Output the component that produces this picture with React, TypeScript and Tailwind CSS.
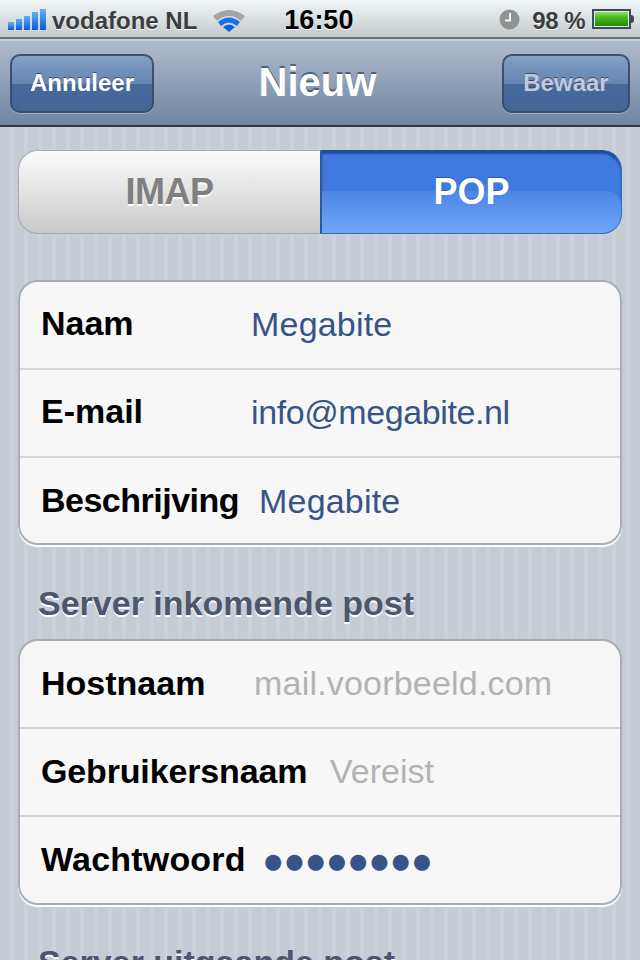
const sans = "font-['Liberation_Sans',Arial,sans-serif]";

function SignalBars() {
  return (
    <svg width="39" height="21" viewBox="0 0 39 21" className="shrink-0">
      <defs>
        <linearGradient id="signal" x1="0" y1="0" x2="0" y2="1">
          <stop offset="0" stopColor="#5cb4f5" />
          <stop offset="1" stopColor="#0a58e0" />
        </linearGradient>
      </defs>
      <rect x="0" y="13" width="6" height="8" fill="url(#signal)" />
      <rect x="8" y="10" width="6" height="11" fill="url(#signal)" />
      <rect x="16" y="7" width="6" height="14" fill="url(#signal)" />
      <rect x="24" y="3" width="6" height="18" fill="url(#signal)" />
      <rect x="32" y="0" width="6" height="21" fill="url(#signal)" />
    </svg>
  );
}

function WifiIcon() {
  return (
    <svg width="34" height="25" viewBox="0 0 34 25" className="shrink-0">
      <path d="M1 9 Q17 -3 33 9 L29 14 Q17 4 5 14 Z" fill="#a3a5a6" />
      <path d="M6 15 Q17 6 28 15 L25 19 Q17 12 9 19 Z" fill="#1a6ee8" />
      <path d="M11 20 Q17 15 23 20 L17 25 Z" fill="#0f5fe0" />
    </svg>
  );
}

function ClockIcon() {
  return (
    <svg width="21" height="21" viewBox="0 0 21 21" className="shrink-0">
      <circle cx="10.5" cy="10.5" r="10" fill="#8d9391" />
      <path d="M11 4 V11.5 H6" fill="none" stroke="#f4f6f5" strokeWidth="2" />
    </svg>
  );
}

function Battery() {
  return (
    <div className="flex shrink-0 items-center">
      <div className="h-[20px] w-[39px] border-2 border-[#3d4a5c] bg-[#e8ecea] p-px">
        <div className="h-full w-[33px] bg-[linear-gradient(#8fe060_0%,#4fb81c_40%,#1f8a04_100%)]" />
      </div>
      <div className="h-[8px] w-[3px] rounded-r-sm bg-[#3d4a5c]" />
    </div>
  );
}

function StatusBar() {
  return (
    <div className="flex h-[39px] items-center border-b-2 border-[#6d7073] bg-[linear-gradient(#f1f7f9,#c4cacb)] pl-2 pr-[6px] pt-px">
      <SignalBars />
      <span className="ml-[5px] mt-[3px] text-[24px] font-bold leading-none text-[#3c3d3e] [text-shadow:0_1px_0_white]">
        vodafone NL
      </span>
      <div className="ml-[15px]">
        <WifiIcon />
      </div>
      <span className="ml-[38px] mt-[2px] text-[27px] font-bold leading-none text-black [text-shadow:0_1px_0_white]">
        16:50
      </span>
      <div className="ml-auto mr-[12px]">
        <ClockIcon />
      </div>
      <span className="mr-[7px] mt-[3px] text-[24px] font-bold leading-none tracking-[-0.5px] text-[#3c3d3e] [text-shadow:0_1px_0_white]">
        98 %
      </span>
      <Battery />
    </div>
  );
}

function NavButton({ label, dim, width }: { label: string; dim?: boolean; width: string }) {
  return (
    <div
      className={`relative flex h-[59px] items-center justify-center overflow-hidden rounded-[10px] border-2 border-[#3c4f6c] bg-[linear-gradient(#84a0c4_0%,#6485b0_50%,#46689a_50%,#456698_100%)] shadow-[0_1px_0_rgba(255,255,255,0.3)] ${width}`}
    >
      <span
        className={`text-[24px] font-bold leading-none ${dim ? "text-[#c0cadb]" : "text-white"} [text-shadow:0_-1px_0_rgba(30,50,80,0.7)]`}
      >
        {label}
      </span>
    </div>
  );
}

function NavBar() {
  return (
    <div className="flex h-[88px] items-center justify-between border-t-2 border-b-2 border-t-[#c4cdd9] border-b-[#2d3642] bg-[linear-gradient(#b0bccd,#6d84a2)] px-[10px]">
      <NavButton label="Annuleer" width="w-[144px]" />
      <span className="mb-[2px] mr-[21px] text-[40px] font-bold leading-none text-white [text-shadow:0_-2px_0_rgba(50,65,90,0.7)]">
        Nieuw
      </span>
      <NavButton label="Bewaar" dim width="w-[128px]" />
    </div>
  );
}

function Segmented() {
  return (
    <div className="mx-[18px] mt-[23px] flex h-[84px]">
      <div className="flex w-[302px] items-center justify-center rounded-l-[20px] border border-r-0 border-[#a7abaf] bg-[linear-gradient(#fcfcfc,#c9c9c9)]">
        <span className="text-[36px] font-bold leading-none tracking-[-0.5px] text-[#7f7f7f] [text-shadow:0_2px_0_white]">
          IMAP
        </span>
      </div>
      <div className="relative flex flex-1 items-center justify-center overflow-hidden rounded-r-[20px] border border-l-2 border-[#3a6cbc] border-l-[#2a5aa0] border-t-[#1f4c9c] bg-[#3e7ae0] shadow-[inset_0_3px_2px_#1f4c9c]">
        <div className="absolute inset-x-0 bottom-0 h-[51%] rounded-tr-[14px] bg-[linear-gradient(#4a86e6,#70a6fa)]" />
        <span className="relative text-[36px] font-bold leading-none text-white [text-shadow:0_-1px_0_#2a5aa0]">
          POP
        </span>
      </div>
    </div>
  );
}

function Row({
  label,
  labelClass,
  value,
  valueClass,
  last,
}: {
  label: string;
  labelClass: string;
  value: string;
  valueClass: string;
  last?: boolean;
}) {
  return (
    <div className={`flex items-center pl-[21px] ${last ? "h-[85px]" : "h-[88px] border-b-2 border-[#d4d4d4] pb-[2px]"}`}>
      <span className={`text-[34px] font-bold leading-none text-black ${labelClass}`}>{label}</span>
      <span className={`leading-none ${valueClass}`}>{value}</span>
    </div>
  );
}

function Group({ className, children }: { className: string; children: React.ReactNode }) {
  return (
    <div
      className={`mx-[18px] overflow-hidden rounded-[20px] border-2 border-[#a9adb3] bg-[#f7f7f7] shadow-[0_2px_0_white] ${className}`}
    >
      {children}
    </div>
  );
}

function SectionHeader({ children, className }: { children: string; className: string }) {
  return (
    <div
      className={`pl-[38px] text-[34px] font-bold leading-none text-[#4c566c] [text-shadow:0_2px_0_white] ${className}`}
    >
      {children}
    </div>
  );
}

const BLUE = "text-[34px] text-[#385487]";
const GREY = "text-[34px] text-[#b3b3b3]";

export default function App() {
  return (
    <div
      className={`h-[960px] w-[640px] overflow-hidden bg-[repeating-linear-gradient(90deg,#c5ccd4_0,#c5ccd4_10px,#cbd2d9_10px,#cbd2d9_14px)] ${sans}`}
    >
      <StatusBar />
      <NavBar />
      <Segmented />
      <Group className="mt-[46px]">
        <Row label="Naam" labelClass="mb-[2px] w-[210px]" value="Megabite" valueClass={`${BLUE} tracking-[0.2px]`} />
        <Row label="E-mail" labelClass="mb-[2px] w-[210px]" value="info@megabite.nl" valueClass={`${BLUE} tracking-[-0.4px]`} />
        <Row
          label="Beschrijving"
          labelClass="mb-[2px] w-[218px] tracking-[-0.5px]"
          value="Megabite"
          valueClass={`${BLUE} tracking-[0.2px]`}
          last
        />
      </Group>
      <SectionHeader className="mt-[41px]">Server inkomende post</SectionHeader>
      <Group className="mt-[19px] pb-px">
        <Row label="Hostnaam" labelClass="w-[213px]" value="mail.voorbeeld.com" valueClass={`${GREY} tracking-[0.2px]`} />
        <Row label="Gebruikersnaam" labelClass="w-[289px] tracking-[-0.15px]" value="Vereist" valueClass={GREY} />
        <Row
          label="Wachtwoord"
          labelClass="mb-[2px] w-[221px] tracking-[0.2px]"
          value="●●●●●●●●"
          valueClass="mt-[2px] text-[37px] tracking-[-1.1px] text-[#385487]"
          last
        />
      </Group>
      <SectionHeader className="mt-[40px]">Server uitgaande post</SectionHeader>
    </div>
  );
}
